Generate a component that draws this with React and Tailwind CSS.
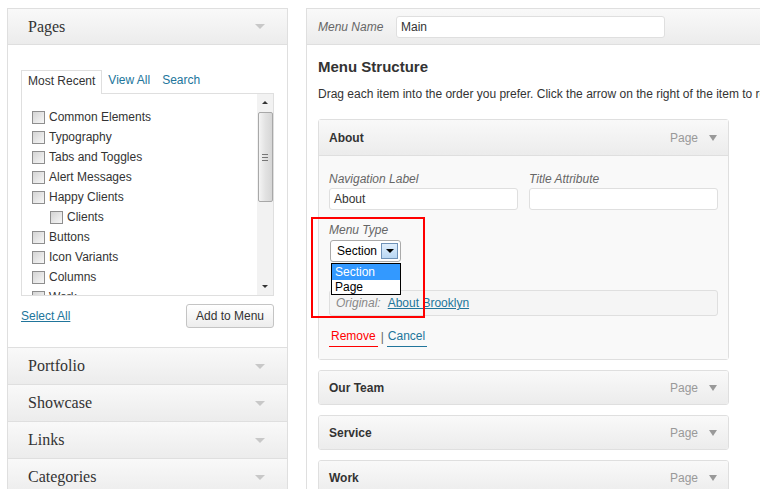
import { useState } from "react";

// ---------------------------------------------------------------------------
// Data
// ---------------------------------------------------------------------------
const pages = [
  { label: "Common Elements" },
  { label: "Typography" },
  { label: "Tabs and Toggles" },
  { label: "Alert Messages" },
  { label: "Happy Clients" },
  { label: "Clients", child: true },
  { label: "Buttons" },
  { label: "Icon Variants" },
  { label: "Columns" },
  { label: "Work" },
];

const boxes = ["Portfolio", "Showcase", "Links", "Categories"];
const menuItems = ["Our Team", "Service", "Work"];

// ---------------------------------------------------------------------------
// Small pieces
// ---------------------------------------------------------------------------
function HeaderArrow() {
  return (
    <span className="w-0 h-0 border-x-[5px] border-t-[5px] border-x-transparent border-t-[#c8c8c8]" />
  );
}

function Checkbox() {
  return (
    <span className="w-[13px] h-[13px] border border-[#8e8e8e] bg-gradient-to-br from-[#d4d4d4] to-[#f7f7f7] shrink-0" />
  );
}

function SideHeader({ title, tall = false }) {
  return (
    <div
      className={`${
        tall ? "h-[37px]" : "h-[36px]"
      } flex items-center justify-between pl-[20px] pr-[22px] bg-gradient-to-b from-[#f9f9f9] to-[#ececec] border-b border-[#dfdfdf]`}
    >
      <span className="text-[16px] text-[#333]" style={{ fontFamily: '"Liberation Serif", serif' }}>
        {title}
      </span>
      <HeaderArrow />
    </div>
  );
}

function ItemHeader({ title, short = false }) {
  return (
    <div
      className={`${
        short ? "h-[33px]" : "h-[35px]"
      } flex items-center justify-between pl-[10px] pr-[11px] bg-gradient-to-b from-[#f9f9f9] to-[#ececec]`}
    >
      <span className="text-[12px] font-bold text-[#333]">{title}</span>
      <span className="flex items-center gap-[11px]">
        <span className="text-[12px] text-[#999]">Page</span>
        <span className="w-0 h-0 border-x-[4px] border-t-[6px] border-x-transparent border-t-[#999]" />
      </span>
    </div>
  );
}

// ---------------------------------------------------------------------------
// Component
// ---------------------------------------------------------------------------
export default function App() {
  const [tab, setTab] = useState("recent");

  return (
    <div
      className="w-[760px] h-[489px] overflow-hidden bg-white relative flex items-start pt-[8px] pl-[7px] gap-[18px] text-[#333]"
      style={{ fontFamily: '"Liberation Sans", Arial, sans-serif' }}
    >
      {/* ---- Left column ---- */}
      <div className="w-[281px] shrink-0 border-x border-t border-[#dfdfdf]">
        <SideHeader title="Pages" />
        <div className="bg-white px-[13px] pt-[25px] pb-[19px] border-b border-[#dfdfdf]">
          <div className="flex items-end text-[12px]">
            <button
              onClick={() => setTab("recent")}
              className="relative z-10 -mb-px h-[24px] leading-[20px] pb-[4px] px-[6px] border border-b-0 border-[#dfdfdf] bg-white text-[#333]"
            >
              Most Recent
            </button>
            <span className="h-[23px] leading-[20px] px-[6px] text-[#21759b]">View All</span>
            <span className="h-[23px] leading-[20px] px-[6px] text-[#21759b]">Search</span>
          </div>

          <div className="h-[203px] border border-[#dfdfdf] flex overflow-hidden">
            <div className="flex-1 pt-[13px] pl-[10px]">
              {pages.map((p) => (
                <label
                  key={p.label}
                  className={`h-[20px] flex items-center gap-[4px] text-[12px] text-[#333] ${
                    p.child ? "pl-[18px]" : ""
                  }`}
                >
                  <Checkbox />
                  {p.label}
                </label>
              ))}
            </div>
            <div className="w-[16px] bg-[#f2f2f2] flex flex-col items-center">
              <div className="h-[17px] flex items-center justify-center">
                <span className="w-0 h-0 border-x-[3px] border-b-[3px] border-x-transparent border-b-[#333]" />
              </div>
              <div className="mt-[1px] w-[15px] h-[90px] border border-[#a8a8a8] rounded-[2px] bg-gradient-to-r from-[#f4f4f4] via-[#e2e2e2] to-[#d6d6d6] flex flex-col items-center justify-center gap-[2px]">
                <span className="w-[6px] h-px bg-[#777]" />
                <span className="w-[6px] h-px bg-[#777]" />
                <span className="w-[6px] h-px bg-[#777]" />
              </div>
              <div className="flex-1" />
              <div className="h-[17px] flex items-center justify-center">
                <span className="w-0 h-0 border-x-[3px] border-t-[3px] border-x-transparent border-t-[#333]" />
              </div>
            </div>
          </div>

          <div className="mt-[8px] flex items-center justify-between">
            <span className="text-[12px] text-[#21759b] underline">Select All</span>
            <button className="w-[88px] h-[24px] border border-[#c4c4c4] rounded-[3px] bg-gradient-to-b from-white to-[#ededed] text-[12px] text-[#333]">
              Add to Menu
            </button>
          </div>
        </div>
        {boxes.map((b) => (
          <SideHeader key={b} title={b} tall />
        ))}
      </div>

      {/* ---- Right column ---- */}
      <div className="w-[470px] shrink-0 border-l border-t border-[#dfdfdf]">
        <div className="h-[36px] flex items-center px-[11px] border-b border-[#dfdfdf] bg-gradient-to-b from-[#f9f9f9] to-[#ececec]">
          <span className="w-[78px] text-[12px] italic text-[#666]">Menu Name</span>
          <div className="w-[269px] h-[22px] border border-[#dfdfdf] rounded-[3px] bg-white px-[4px] text-[12px] leading-[20px] text-[#333]">
            Main
          </div>
        </div>

        <div className="px-[11px] pt-[13px]">
          <h2 className="text-[15px] leading-[18px] font-bold text-[#333]">Menu Structure</h2>
          <p className="mt-[10px] text-[12px] leading-[16px] whitespace-nowrap text-[#333]">
            Drag each item into the order you prefer. Click the arrow on the right of the item to
            reveal additional configuration options.
          </p>

          {/* ---- Open item ---- */}
          <div className="mt-[17px] w-[411px] border border-[#dfdfdf] rounded-[3px]">
            <div className="border-b border-[#dfdfdf]">
              <ItemHeader title="About" />
            </div>
            <div className="bg-[#f9f9f9] px-[10px] pt-[15px] pb-[12px]">
              <div className="flex gap-[11px]">
                <div className="w-[189px]">
                  <div className="text-[12px] leading-[16px] italic text-[#666]">Navigation Label</div>
                  <div className="mt-[1px] h-[22px] border border-[#dfdfdf] rounded-[3px] bg-white px-[4px] text-[12px] leading-[20px] text-[#333]">
                    About
                  </div>
                </div>
                <div className="w-[189px]">
                  <div className="text-[12px] leading-[16px] italic text-[#666]">Title Attribute</div>
                  <div className="mt-[1px] h-[22px] border border-[#dfdfdf] rounded-[3px] bg-white" />
                </div>
              </div>

              <div className="mt-[12px] text-[12px] leading-[16px] italic text-[#666]">Menu Type</div>
              <div className="relative mt-[2px] ml-[1px] w-[71px] h-[22px] border border-[#aaa] rounded-[3px] bg-white flex items-center justify-between pl-[6px] pr-[2px]">
                <span className="text-[12px] text-[#000]">Section</span>
                <span className="w-[17px] h-[16px] border border-[#6f92b8] bg-gradient-to-b from-[#dfeefc] to-[#b9d7f3] flex items-center justify-center">
                  <span className="w-0 h-0 border-x-[4px] border-t-[4px] border-x-transparent border-t-[#000]" />
                </span>
                <div className="absolute left-[0px] top-[22px] w-[70px] border border-[#000] bg-white text-[12px] z-20">
                  <div className="h-[16px] leading-[16px] px-[3px] bg-[#3399ff] text-white">Section</div>
                  <div className="h-[14px] leading-[14px] px-[3px] text-[#000]">Page</div>
                </div>
              </div>

              <div className="mt-[28px] h-[26px] border border-[#dfdfdf] rounded-[3px] bg-[#f5f5f5] flex items-center px-[6px] gap-[7px] text-[12px]">
                <span className="italic text-[#888]">Original:</span>
                <span className="text-[#21759b] underline">About Brooklyn</span>
              </div>

              <div className="mt-[13px] flex items-end gap-[3px] text-[12px] leading-[14px]">
                <span className="pl-[2px] pr-[2px] pb-[3px] border-b border-[#ff0000] text-[#ff0000]">Remove</span>
                <span className="pb-[3px] text-[#666]">|</span>
                <span className="pl-[1px] pr-[2px] pb-[3px] border-b border-[#21759b] text-[#21759b]">Cancel</span>
              </div>
            </div>
          </div>

          {/* ---- Collapsed items ---- */}
          {menuItems.map((m) => (
            <div key={m} className="mt-[10px] w-[411px] border border-[#dfdfdf] rounded-[3px] overflow-hidden">
              <ItemHeader title={m} short />
            </div>
          ))}
        </div>
      </div>

      {/* ---- Annotation ---- */}
      <div className="absolute left-[311px] top-[217px] w-[114px] h-[101px] border-2 border-[#ff0000] pointer-events-none z-30" />
    </div>
  );
}
